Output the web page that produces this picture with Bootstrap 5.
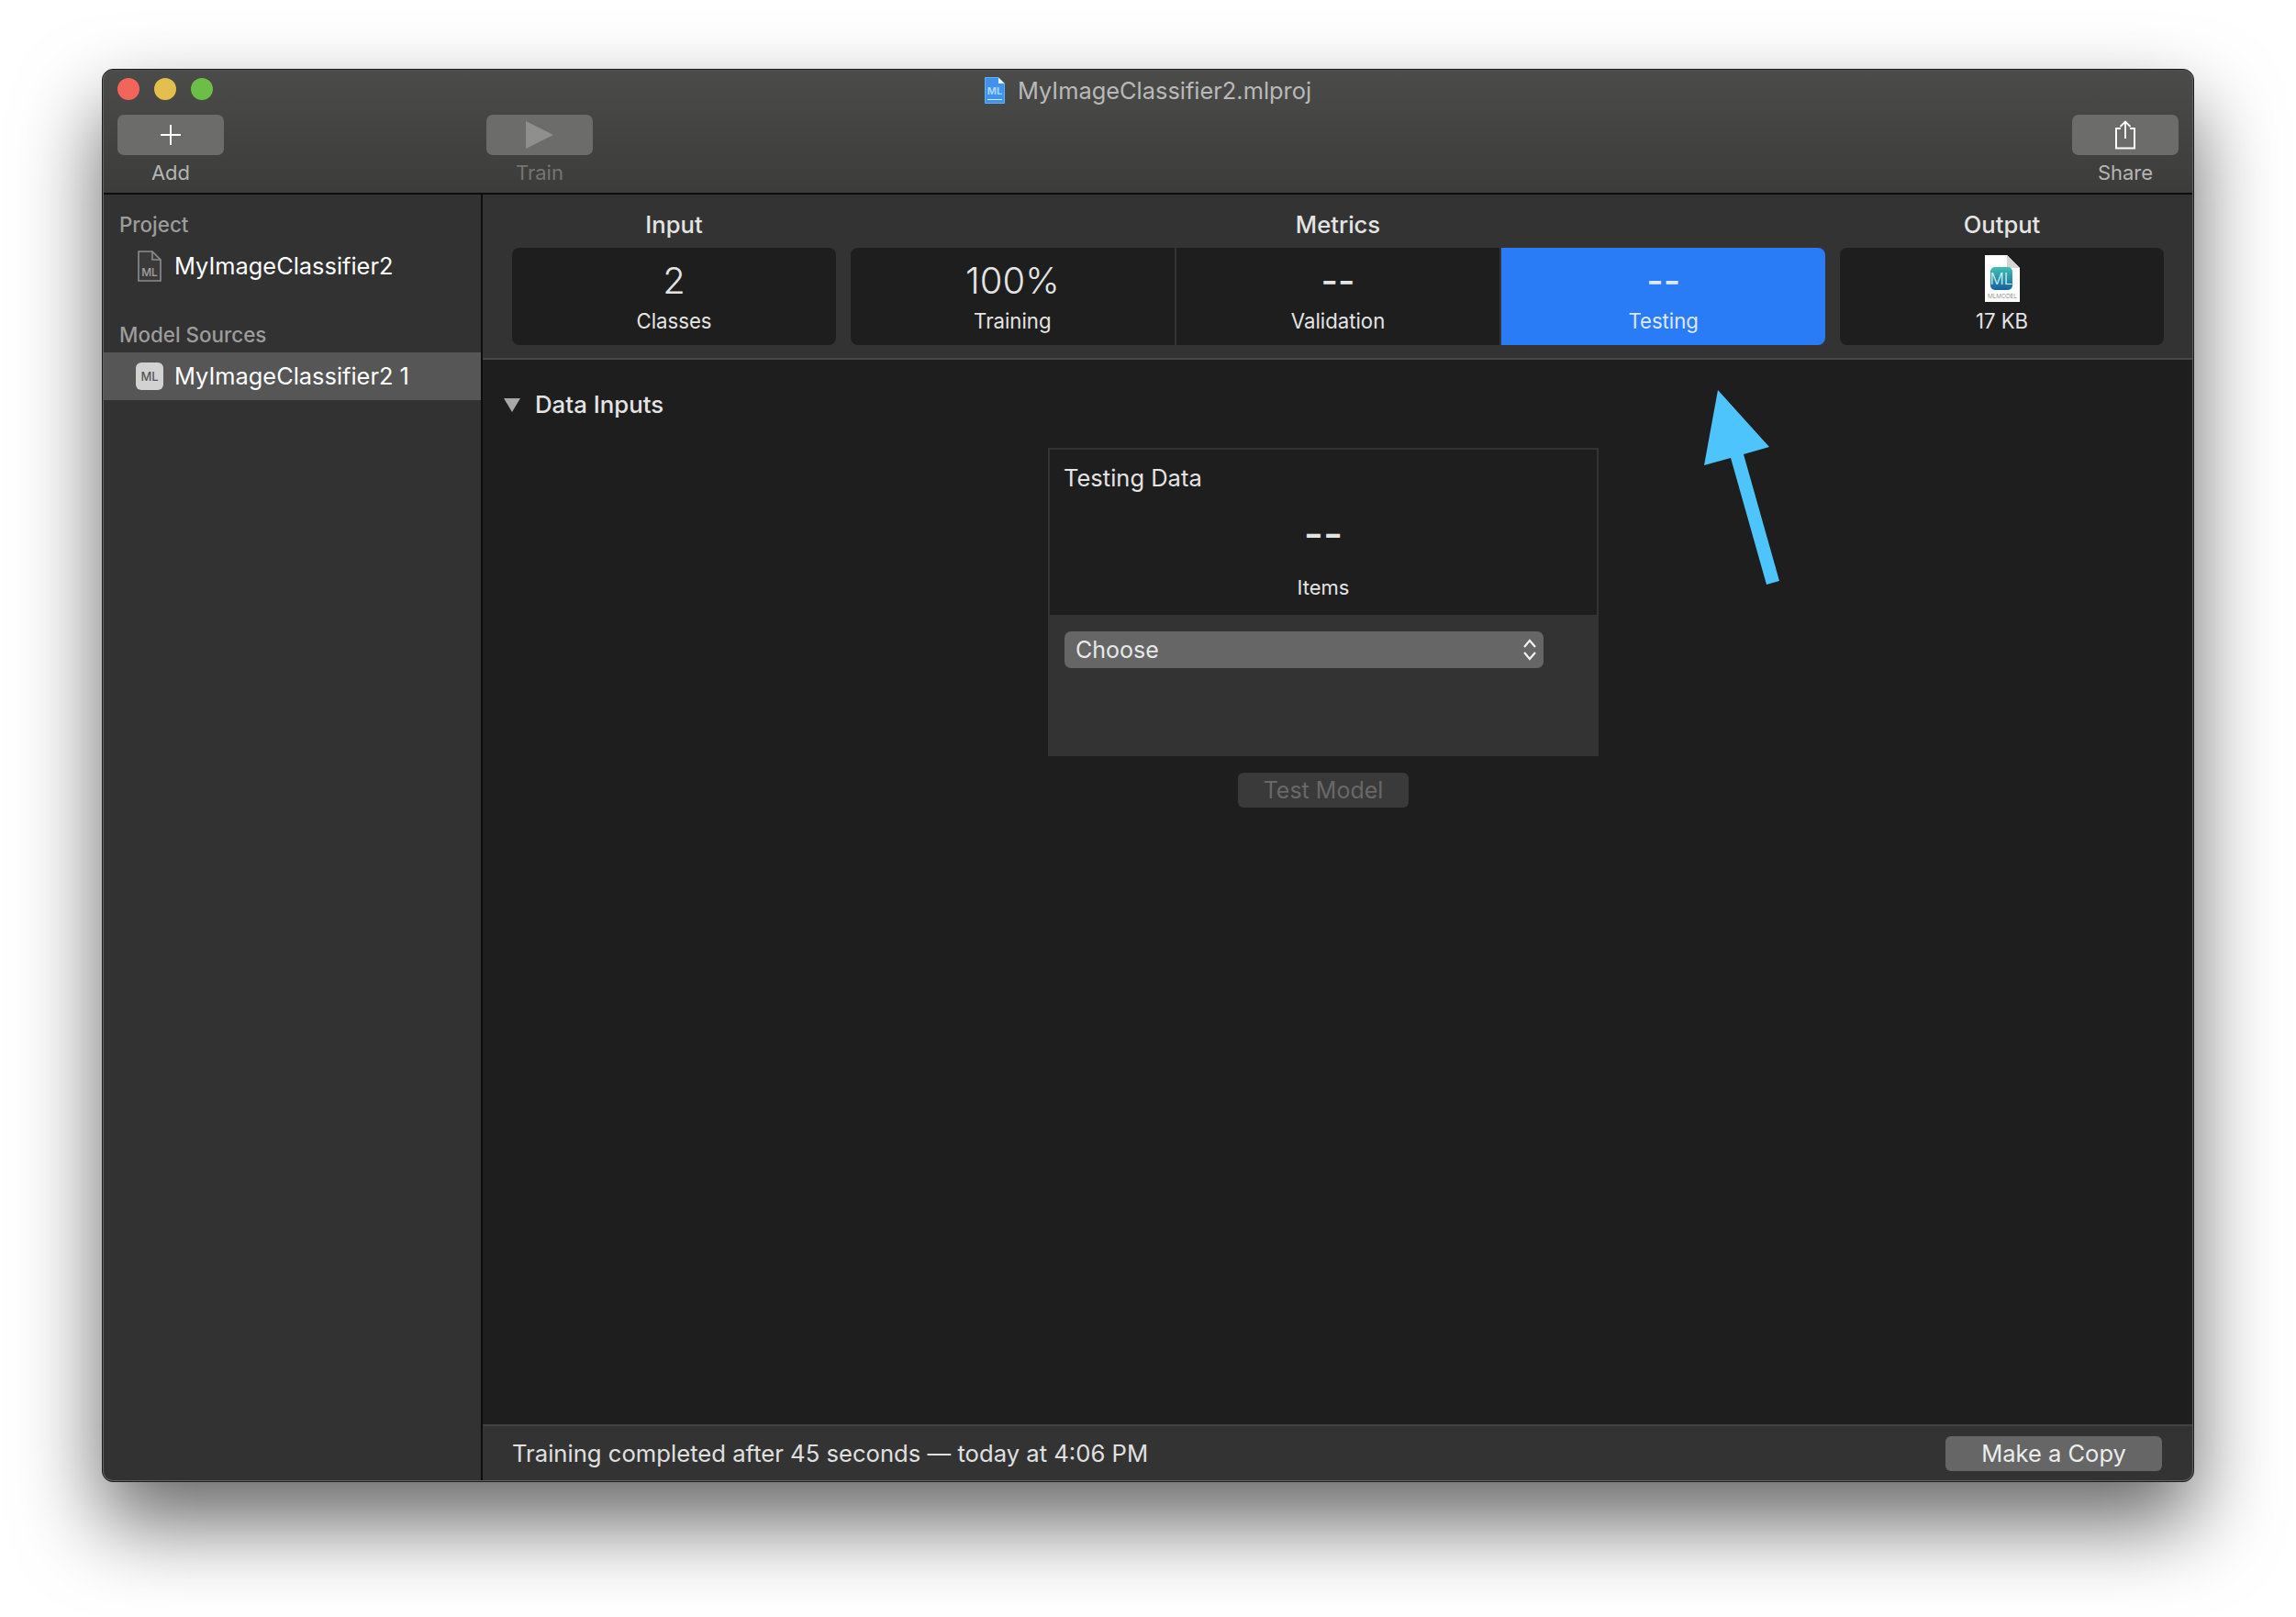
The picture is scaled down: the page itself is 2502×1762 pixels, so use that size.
<!doctype html>
<html lang="en">

<head>
    <meta charset="utf-8">
    <meta name="viewport" content="width=device-width, initial-scale=1">
    <title>MyImageClassifier2.mlproj</title>
    <link href="https://cdn.jsdelivr.net/npm/bootstrap@5.3.0/dist/css/bootstrap.min.css" rel="stylesheet">
    <style>
        body {
            background: #fff;
            font-family: "Inter", "Liberation Sans", sans-serif;
            height: 1762px;
            overflow: hidden;
        }

        .win-frame {
            position: relative;
            width: 2280px;
            height: 1540px;
            margin: 75px 0 0 111px;
            border: 1px solid #1c1c1c;
            border-radius: 12px;
            overflow: hidden;
            background: #333;
            box-shadow: 0 44px 90px rgba(0, 0, 0, .6);
        }

        /* light inner edge of the window, sits over the panels */
        .win-frame::after {
            content: "";
            position: absolute;
            inset: 0;
            border: 1px solid #626262;
            border-top-color: #525251;
            border-radius: 11px;
            pointer-events: none;
        }

        .tool-head {
            height: 136px;
            flex: none;
            background: linear-gradient(#4b4b4a, #3c3c3b);
            border-bottom: 2px solid #0d0d0d;
        }

        .title-row {
            height: 49px;
            padding: 9px 16px 0;
        }

        .title-side {
            flex: 1 1 0;
            gap: 16px;
        }

        .light {
            width: 24px;
            height: 24px;
            border-radius: 50%;
        }

        .light-red { background: #f3655b; }
        .light-yellow { background: #e3c04b; }
        .light-green { background: #6dbe47; }

        .win-title {
            margin-top: -1px;
            color: #b9b9b9;
            font-size: 25.4px;
            line-height: 24px;
            gap: 14px;
        }

        .tool-row {
            padding: 0 16px;
        }

        .tool-item {
            width: 116px;
        }

        .tool-train {
            margin-left: 286px;
        }

        .tool-btn {
            width: 116px;
            height: 44px;
            padding: 0;
            border: 0;
            border-radius: 7px;
            background: #6c6c6b;
        }

        .tool-btn:disabled {
            background: #6c6c6b;
            opacity: 1;
        }

        .tool-label {
            margin-top: 7px;
            color: #b5b5b5;
            font-size: 22px;
            line-height: 24px;
        }

        .tool-label-off {
            color: #747474;
        }

        .main-area {
            min-height: 0;
        }

        .side-bar {
            width: 414px;
            flex: none;
            background: #323232;
            border-right: 2px solid #0d0d0d;
            padding-top: 21px;
        }

        .side-head {
            padding-left: 18px;
            color: #9c9c9c;
            font-size: 22.4px;
            font-weight: 500;
            line-height: 24px;
        }

        .side-item {
            color: #fff;
            font-size: 25.4px;
            line-height: 40px;
        }

        .side-project {
            margin: 13px 0 43px;
            padding-left: 38px;
            gap: 14px;
        }

        .side-picked {
            height: 52px;
            margin-top: 7px;
            padding-left: 36px;
            gap: 12px;
            background: #565656;
        }

        .ml-tile {
            width: 30px;
            height: 30px;
            border-radius: 6px;
            background: #d2d2d2;
            color: #555;
            font-size: 13px;
            font-weight: 500;
            line-height: 30px;
            text-align: center;
        }

        .summary {
            flex: none;
            height: 180px;
            padding: 18px 32px 0;
            gap: 16px;
            background: #333;
            border-bottom: 2px solid #474747;
        }

        .step-one {
            width: 353px;
        }

        .step-head {
            height: 30px;
            margin-bottom: 10px;
            color: #e4e4e4;
            font-size: 25.6px;
            font-weight: 500;
            line-height: 30px;
            text-align: center;
        }

        .step-group {
            height: 106px;
            gap: 2px;
            border-radius: 8px;
            overflow: hidden;
        }

        .step-cell {
            height: 106px;
            flex: 1 1 0;
            background: #1e1e1e;
            color: #e4e4e4;
            padding-top: 14px;
            text-align: center;
        }

        .step-on {
            background: #2a7bf6;
            color: #dce9fd;
        }

        .step-value {
            height: 44px;
            font-size: 40px;
            font-weight: 300;
            line-height: 44px;
        }

        .step-dash {
            font-size: 40px;
            font-weight: 500;
        }

        .step-label {
            margin-top: 9px;
            font-size: 22.2px;
            line-height: 26px;
        }

        .output-pic {
            flex: none;
            margin-top: -6px;
        }

        .detail {
            min-height: 0;
            background: #1e1e1e;
            padding: 35px 32px 0 0;
        }

        .detail-head {
            gap: 16px;
            margin-left: 23px;
            color: #e4e4e4;
            font-size: 25.8px;
            font-weight: 500;
            line-height: 28px;
        }

        .data-panel {
            width: 600px;
            height: 336px;
            margin: 33px auto 0;
            background: #333;
        }

        .data-top {
            height: 182px;
            background: #1e1e1e;
            border: 2px solid #333;
            border-bottom: 0;
            color: #e4e4e4;
            padding: 17px 15px 0;
        }

        .data-title {
            font-size: 25.5px;
            line-height: 28px;
        }

        .data-dash {
            margin-top: 24px;
            font-size: 46px;
            font-weight: 500;
            line-height: 44px;
            text-align: center;
        }

        .data-items {
            margin-top: 24px;
            font-size: 22px;
            line-height: 26px;
            text-align: center;
        }

        .data-pick {
            width: 522px;
            height: 40px;
            margin: 18px;
            padding: 0 7px 0 12px;
            border: 0;
            border-radius: 7px;
            background: #666;
            color: #e8e8e8;
            font-size: 25px;
            line-height: 40px;
        }

        .data-pick:hover, .data-pick:active {
            background: #666;
            color: #e8e8e8;
        }

        .test-btn {
            width: 186px;
            height: 38px;
            margin-top: 18px;
            padding: 0;
            border: 0;
            border-radius: 6px;
            background: #3a3a3a;
            color: #686868;
            font-size: 25px;
            line-height: 38px;
        }

        .test-btn:disabled {
            background: #3a3a3a;
            color: #686868;
            opacity: 1;
        }

        .status-bar {
            flex: none;
            height: 62px;
            padding: 0 34px 0 32px;
            background: #333;
            border-top: 2px solid #424242;
            color: #e0e0e0;
            font-size: 25.65px;
        }

        .copy-btn {
            width: 236px;
            height: 38px;
            padding: 0;
            border: 0;
            border-radius: 6px;
            background: #666;
            color: #ececec;
            font-size: 25.5px;
            line-height: 38px;
        }

        .copy-btn:hover {
            background: #666;
            color: #ececec;
        }

        .call-arrow {
            position: absolute;
            left: 0;
            top: 0;
            pointer-events: none;
        }
    </style>
</head>

<body>
    <div class="win-frame d-flex flex-column">
        <header class="tool-head">
            <div class="title-row d-flex align-items-start">
                <div class="title-side d-flex">
                    <span class="light light-red"></span>
                    <span class="light light-yellow"></span>
                    <span class="light light-green"></span>
                </div>
                <div class="win-title d-flex align-items-center">
                    <svg width="22" height="29" viewBox="0 0 22 29">
                        <path d="M.5.5H15L21.5 7V28.5H.5Z" fill="#3f93ee" stroke="#5db0fa" />
                        <path d="M15 .5V7H21.5Z" fill="#f2f7fd" />
                        <path d="M3 24.5H19" stroke="#d7ebff" stroke-width="1.2" />
                        <text x="11" y="19" font-size="11" font-weight="700" fill="#a9d5fb" text-anchor="middle">ML</text>
                    </svg>
                    <span>MyImageClassifier2.mlproj</span>
                </div>
                <div class="title-side"></div>
            </div>
            <div class="tool-row d-flex">
                <div class="tool-item d-flex flex-column align-items-center">
                    <button class="tool-btn btn d-flex align-items-center justify-content-center">
                        <svg width="24" height="24" viewBox="0 0 24 24">
                            <path d="M12 1V23M1 12H23" stroke="#fff" stroke-width="2" />
                        </svg>
                    </button>
                    <span class="tool-label">Add</span>
                </div>
                <div class="tool-item tool-train d-flex flex-column align-items-center">
                    <button class="tool-btn btn d-flex align-items-center justify-content-center" disabled>
                        <svg width="30" height="30" viewBox="0 0 30 30">
                            <path d="M0 0L30 15L0 30Z" fill="#8f8f8e" />
                        </svg>
                    </button>
                    <span class="tool-label tool-label-off">Train</span>
                </div>
                <div class="tool-item ms-auto d-flex flex-column align-items-center">
                    <button class="tool-btn btn d-flex align-items-center justify-content-center">
                        <svg width="24" height="32" viewBox="0 0 24 32">
                            <path d="M7 9H2V30.500H22V9H17" fill="none" stroke="#fff" stroke-width="2" />
                            <path d="M12 20V1.500M6.500 7L12 1.500L17.500 7" fill="none" stroke="#fff" stroke-width="1.800" />
                        </svg>
                    </button>
                    <span class="tool-label">Share</span>
                </div>
            </div>
        </header>

        <div class="main-area d-flex flex-grow-1">
            <aside class="side-bar">
                <div class="side-head">Project</div>
                <div class="side-item side-project d-flex align-items-center">
                    <svg width="26" height="34" viewBox="0 0 26 34">
                        <path d="M1 1H16L25 10V33H1Z" fill="#3a3a3a" stroke="#8d8d8d" stroke-width="1.600" />
                        <path d="M16 1V10H25" fill="none" stroke="#8d8d8d" stroke-width="1.600" />
                        <text x="13" y="28" font-size="12" font-weight="500" fill="#a2a2a2" text-anchor="middle">ML</text>
                    </svg>
                    <span>MyImageClassifier2</span>
                </div>
                <div class="side-head">Model Sources</div>
                <div class="side-item side-picked d-flex align-items-center">
                    <span class="ml-tile">ML</span>
                    <span>MyImageClassifier2 1</span>
                </div>
            </aside>

            <div class="d-flex flex-column flex-grow-1">
                <section class="summary d-flex">
                    <div class="step-one">
                        <div class="step-head">Input</div>
                        <div class="step-group d-flex">
                            <div class="step-cell">
                                <div class="step-value">2</div>
                                <div class="step-label">Classes</div>
                            </div>
                        </div>
                    </div>
                    <div class="flex-grow-1">
                        <div class="step-head">Metrics</div>
                        <div class="step-group d-flex">
                            <div class="step-cell">
                                <div class="step-value">100%</div>
                                <div class="step-label">Training</div>
                            </div>
                            <div class="step-cell">
                                <div class="step-value step-dash">--</div>
                                <div class="step-label">Validation</div>
                            </div>
                            <div class="step-cell step-on">
                                <div class="step-value step-dash">--</div>
                                <div class="step-label">Testing</div>
                            </div>
                        </div>
                    </div>
                    <div class="step-one">
                        <div class="step-head">Output</div>
                        <div class="step-group d-flex">
                            <div class="step-cell">
                                <div class="step-value d-flex justify-content-center">
                                    <svg class="output-pic" width="38" height="51" viewBox="0 0 38 51">
                                        <defs>
                                            <linearGradient id="mlTile" x1="0" y1="0" x2="0" y2="1">
                                                <stop offset="0" stop-color="#3fc1b4" />
                                                <stop offset="1" stop-color="#15609e" />
                                            </linearGradient>
                                        </defs>
                                        <path d="M0 0H24L38 14V51H0Z" fill="#fff" />
                                        <path d="M24 0V14H38Z" fill="#d5d5d5" />
                                        <rect x="6" y="13" width="24" height="25" rx="5" fill="url(#mlTile)" />
                                        <text x="18" y="32" font-size="17" font-weight="300" fill="#d5f5f5" text-anchor="middle">ML</text>
                                        <text x="19" y="47" font-size="6.400" fill="#777" text-anchor="middle">MLMODEL</text>
                                    </svg>
                                </div>
                                <div class="step-label">17 KB</div>
                            </div>
                        </div>
                    </div>
                </section>

                <section class="detail flex-grow-1">
                    <div class="detail-head d-flex align-items-center">
                        <svg width="18" height="15" viewBox="0 0 18 15">
                            <path d="M0 0H18L9 15Z" fill="#a8a8a8" />
                        </svg>
                        <span>Data Inputs</span>
                    </div>
                    <div class="data-panel">
                        <div class="data-top">
                            <div class="data-title">Testing Data</div>
                            <div class="data-dash">--</div>
                            <div class="data-items">Items</div>
                        </div>
                        <button class="data-pick btn d-flex align-items-center justify-content-between">
                            <span>Choose</span>
                            <svg width="16" height="30" viewBox="0 0 16 30">
                                <path d="M2 12L8 5L14 12M2 18L8 25L14 18" fill="none" stroke="#f0f0f0" stroke-width="2.200" />
                            </svg>
                        </button>
                    </div>
                    <div class="text-center">
                        <button class="test-btn btn" disabled>Test Model</button>
                    </div>
                </section>

                <footer class="status-bar d-flex align-items-center justify-content-between">
                    <span>Training completed after 45 seconds — today at 4:06 PM</span>
                    <button class="copy-btn btn">Make a Copy</button>
                </footer>
            </div>
        </div>
    </div>

    <svg class="call-arrow" width="2502" height="1762" viewBox="0 0 2502 1762">
        <path d="M1872 425L1928 487L1900 495L1939 633L1925 637L1886 499L1857 507Z" fill="#4dc4fb" />
    </svg>

    <script src="https://cdn.jsdelivr.net/npm/bootstrap@5.3.0/dist/js/bootstrap.bundle.min.js"></script>
</body>

</html>
